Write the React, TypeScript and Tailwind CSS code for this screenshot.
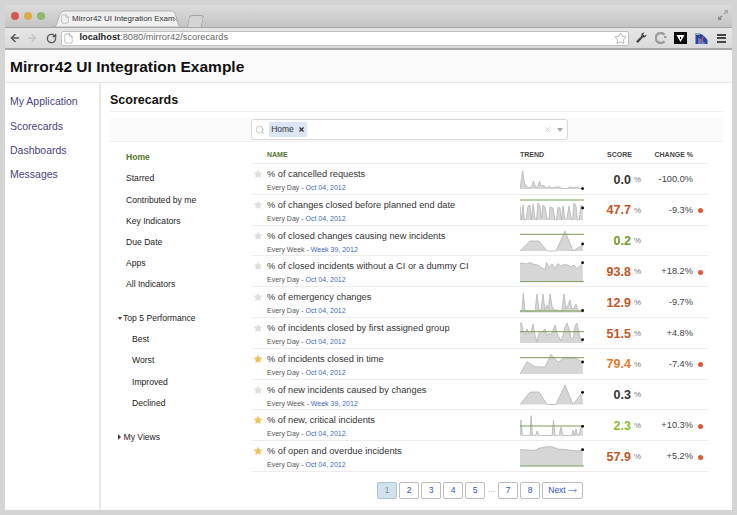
import { ArrowLeft, ArrowRight, RotateCw, File, Star, Search, X, MoveRight } from "lucide-react";

type Row = {
  name: string;
  week?: boolean;
  starred?: boolean;
  score: string;
  color: string;
  change?: string;
  alert?: boolean;
  points: string;
  base: number;
  target?: number;
  dot: number;
};

const rows: Row[] = [
  {
    name: "% of cancelled requests",
    score: "0.0",
    color: "text-[#333333]",
    change: "-100.0%",
    points: "0,20.5 1,14 2.7,3 4.5,15 7,19 10,20 12,17 13.5,13 15.5,19 18,19 19.5,13 21,18 24,17.5 26,20 29,18.5 32,20 36,19 39,19 42,20.5 47,20.5 50,19 54,20 57,19 60,20.5 62.5,20.6",
    base: 21,
    dot: 20.6,
  },
  {
    name: "% of changes closed before planned end date",
    score: "47.7",
    color: "text-[#c2541f]",
    change: "-9.3%",
    alert: true,
    points: "0,8 1.5,22 3,7 4.5,22 6,22 8,8 10,7 11.5,22 13,6 15,20 16.5,22 18,5 20,9 21.5,20 23,7 25,9 27,20 29,22 30,9 33,10 35,22 36.5,22 38,9 40,10 41.5,22 43,8 45,22 47,20 49,8 51,20 52.5,22 54,5 56,8 57.5,22 59,22 61,7 62.5,10",
    base: 22,
    target: 2,
    dot: 10,
  },
  {
    name: "% of closed changes causing new incidents",
    week: true,
    score: "0.2",
    color: "text-[#6f9a23]",
    points: "0,22 10,12 19,12 27,22 36,22 45,2 53,22 62.5,16",
    base: 22,
    target: 5.3,
    dot: 15,
  },
  {
    name: "% of closed incidents without a CI or a dummy CI",
    score: "93.8",
    color: "text-[#c2541f]",
    change: "+18.2%",
    alert: true,
    points: "0,3.5 3,3 6,4 10,2.5 14,4.5 18,5 22,8 25,9.5 26.5,2.5 29,8 32,4 35,8.5 38,3.5 41,6 44,4.5 48,5 51,7 54,5 57,8.5 60,6 62.5,2.7",
    base: 21.6,
    target: 21.6,
    dot: 2.7,
  },
  {
    name: "% of emergency changes",
    score: "12.9",
    color: "text-[#c2541f]",
    change: "-9.7%",
    points: "0,20 2,20 3.3,2.3 5,20 15,20 17,3 19,19 21,19 23,3 25,19 27,14 28.5,18 30,3 32,15 34,19 37,19 40,20 42,18 44,3 46,18 48,14 50,9 52,18 54,17 56,13 58,20 62.5,20",
    base: 21.6,
    target: 20,
    dot: 19.5,
  },
  {
    name: "% of incidents closed by first assigned group",
    score: "51.5",
    color: "text-[#c2541f]",
    change: "+4.8%",
    points: "0,2 1.5,2 3,10 5,14 7,8 9,13 11,12 13,3 15,14 17,21 19,12 21,12 23,10 25,8 27,15 29,12 31,14 33,9 35,4 37,12 39,16 41,20 43,14 45,6 47,2 49,8 51,17 53,18 55,5 57,2 59,13 61,20 62.5,18",
    base: 22,
    target: 10.7,
    dot: 18.7,
  },
  {
    name: "% of incidents closed in time",
    starred: true,
    score: "79.4",
    color: "text-[#df7a2c]",
    change: "-7.4%",
    alert: true,
    points: "0,22 7,9.7 15,14.7 25,15 31,2.3 38,10 44,6 55,6 62.5,10",
    base: 22,
    target: 5.7,
    dot: 10,
  },
  {
    name: "% of new incidents caused by changes",
    week: true,
    score: "0.3",
    color: "text-[#333333]",
    points: "0,21.5 10,9 19,9 27,21.5 36,21.5 45,2 53,21.5 62.5,9",
    base: 21.5,
    dot: 9.3,
  },
  {
    name: "% of new, critical incidents",
    starred: true,
    score: "2.3",
    color: "text-[#8bb92f]",
    change: "+10.3%",
    alert: true,
    points: "0,21.5 1,6 2.5,21.5 10,21.5 11,1.7 12.5,21.5 15.5,21.5 17,17 19,21.5 32,21.5 33.5,6 35,21.5 39,21.5 41,13 43,21.5 52,21.5 53,16 54.5,21.5 56,15 57.5,21.5 59,21 60.5,15 62.5,12.3",
    base: 21.7,
    target: 12,
    dot: 12.3,
  },
  {
    name: "% of open and overdue incidents",
    starred: true,
    score: "57.9",
    color: "text-[#c2541f]",
    change: "+5.2%",
    alert: true,
    points: "0,4.5 8,5 14,5.5 20,3 27,1.7 32,1.7 38,4 46,4.5 52,5.5 58,6 62.5,4.7",
    base: 21,
    target: 21,
    dot: 4.7,
  },
];

const navLinks = ["My Application", "Scorecards", "Dashboards", "Messages"];
const filters = ["Starred", "Contributed by me", "Key Indicators", "Due Date", "Apps", "All Indicators"];
const topFive = ["Best", "Worst", "Improved", "Declined"];
const pages = ["2", "3", "4", "5"];

function Sparkline({ row }: { row: Row }) {
  return (
    <svg width="64" height="24" viewBox="0 0 64 24" className="block">
      <polygon points={`0,${row.base} ${row.points} 63,${row.base}`} fill="#d6d6d6" stroke="none" />
      <polyline points={row.points} fill="none" stroke="#aeaeae" strokeWidth="0.7" />
      {row.target !== undefined && (
        <line x1="0" x2="64" y1={row.target} y2={row.target} stroke="#7a9c55" strokeWidth="1" />
      )}
      <circle cx="62.6" cy={row.dot} r="1.4" fill="#000" />
    </svg>
  );
}

function BrowserChrome() {
  return (
    <>
      <div className="flex h-[23px] shrink-0 items-end bg-gradient-to-b from-[#dcdcdc] to-[#c4c4c4] border-b border-[#a5a5a5]">
        <div className="flex w-[48px] shrink-0 gap-[5px] self-start pl-[6px] pt-[7px]">
          <span className="h-2 w-2 rounded-full bg-[#cf5a54]" />
          <span className="h-2 w-2 rounded-full bg-[#d9aa48]" />
          <span className="h-2 w-2 rounded-full bg-[#93b765]" />
        </div>
        <div className="relative h-[17px] w-[130px] shrink-0">
          <svg width="130" height="17" viewBox="0 0 130 17" className="absolute inset-0">
            <path d="M0 17 C4 17 4 13 6 7 C7 3 9 1 12 1 L118 1 C121 1 122 3 123 7 C125 13 125 17 129 17 Z" fill="#f0f0f0" stroke="#a5a5a5" strokeWidth="0.8" />
          </svg>
          <div className="relative flex h-full items-center pl-[7px] pt-[1px] text-[8px] text-[#333]">
            <File size={10} strokeWidth={1} className="mr-[2px] text-[#888]" />
            <span className="w-[100px] whitespace-nowrap">Mirror42 UI Integration Exam</span>
            <X size={7} strokeWidth={1.5} className="text-[#777]" />
          </div>
        </div>
        <div className="ml-[5px] h-[12px] w-[15px] shrink-0 -skew-x-[12deg] rounded-t-[3px] border border-b-0 border-[#a5a5a5] bg-[#d4d4d4]" />
        <svg width="12" height="12" viewBox="0 0 12 12" className="ml-auto mr-[3px] self-start mt-[4px]" fill="#a8a8a8">
          <path d="M7 1 H11 V5 L9.6 3.6 L7.6 5.6 L6.4 4.4 L8.4 2.4 Z" />
          <path d="M1 11 V7 L2.4 8.4 L4.4 6.4 L5.6 7.6 L3.6 9.6 L5 11 Z" fill="#8c8c8c" />
        </svg>
      </div>
      <div className="flex h-[22px] shrink-0 items-center bg-gradient-to-b from-[#e6e6e6] to-[#dadada] border-b-[2px] border-[#a9a9a9]">
        <ArrowLeft size={12} strokeWidth={3} className="ml-[4px] text-[#555]" />
        <ArrowRight size={12} strokeWidth={3} className="ml-[5px] text-[#c4c4c4]" />
        <RotateCw size={11} strokeWidth={3} className="ml-[8px] text-[#555]" />
        <div className="ml-[4px] flex h-[15px] w-[568px] items-center rounded-[2px] border border-[#c0c0c0] bg-white">
          <File size={11} strokeWidth={1} className="ml-[1px] text-[#777]" />
          <span className="ml-[5.5px] text-[9.25px] text-[#666]">
            <b className="font-bold text-[#222]">localhost</b>:8080/mirror42/scorecards
          </span>
          <Star size={13} strokeWidth={1} className="ml-auto mr-[1.5px] text-[#777]" />
        </div>
        <svg width="12" height="12" viewBox="0 0 12 12" className="ml-[6px]" fill="#444">
          <path d="M11.5 2.5 C11.5 4.6 9.6 6 7.8 5.4 L3 11 L1 9.4 L6.4 4 C5.8 2.2 7.4 0.4 9.6 0.6 L8 2.4 L9.6 3.8 Z" />
        </svg>
        <svg width="12" height="12" viewBox="0 0 12 12" className="ml-[8px]" fill="none">
          <path d="M9.5 2.8 A5 5 0 1 0 9.5 9.2" stroke="#9c9c9c" strokeWidth="2.4" />
          <path d="M9 5 h2.4" stroke="#9c9c9c" strokeWidth="2" />
        </svg>
        <svg width="13" height="12" viewBox="0 0 13 12" className="ml-[7px]">
          <rect width="13" height="12" fill="#0a0a0a" />
          <path d="M2.5 3 H10.5 L6.5 10 Z" fill="#fff" />
          <rect x="6" y="5" width="1" height="2" fill="#000" />
        </svg>
        <svg width="13" height="12" viewBox="0 0 13 12" className="ml-[8px]">
          <path d="M0.5 12 V1 Q7 0 12.5 8 V12 Z" fill="#27479c" />
          <path d="M3 12 V6 Q7 6 10.5 12 Z" fill="#5f7fc9" />
          <path d="M6 11 L8.5 4" stroke="#d84a3c" strokeWidth="1.2" />
          <path d="M0.5 1 L5 1 L5 3 L0.5 3 Z" fill="#9fa9c4" />
        </svg>
        <div className="ml-[9px] flex w-[9px] flex-col gap-[1.5px]">
          <span className="h-[2px] bg-[#444]" />
          <span className="h-[2px] bg-[#444]" />
          <span className="h-[2px] bg-[#444]" />
        </div>
      </div>
    </>
  );
}

function FilterMenu() {
  return (
    <div className="w-[142px] shrink-0 pl-4 pt-[5px] text-[8.6px] text-[#222]">
      <div className="flex h-[21.2px] items-center font-bold text-[#56752f]">Home</div>
      {filters.map((f) => (
        <div key={f} className="flex h-[21.2px] items-center">
          {f}
        </div>
      ))}
      <div className="mt-[12.5px] -ml-[8px] flex h-[21.2px] items-center gap-[1px]">
        <span className="h-0 w-0 border-x-[2.5px] border-t-[3px] border-x-transparent border-t-[#444]" />
        Top 5 Performance
      </div>
      {topFive.map((f) => (
        <div key={f} className="flex h-[21.2px] items-center pl-[6px]">
          {f}
        </div>
      ))}
      <div className="mt-[13px] -ml-[8px] flex h-[21.2px] items-center gap-[2.5px]">
        <span className="h-0 w-0 border-y-[3px] border-l-[3px] border-y-transparent border-l-[#444]" />
        My Views
      </div>
    </div>
  );
}

function ScoreRow({ row }: { row: Row }) {
  return (
    <div className="grid h-[30.8px] grid-cols-[15px_253px_64px_58px_51px_15px] border-b border-[#ececec]">
      <div className="pt-[5px]">
        <Star
          size={10}
          strokeWidth={0}
          className={row.starred ? "ml-[0.5px] fill-[#eec35c]" : "ml-[0.5px] fill-[#dedede]"}
        />
      </div>
      <div className="pt-[4px]">
        <div className="text-[9.25px] leading-[13px] text-[#333]">{row.name}</div>
        <div className="mt-[1px] text-[7px] leading-[11px] text-[#555]">
          {row.week ? "Every Week" : "Every Day"} -{" "}
          <span className="text-[#3f67bd]">{row.week ? "Week 39, 2012" : "Oct 04, 2012"}</span>
        </div>
      </div>
      <div className="pt-[3.5px]">
        <Sparkline row={row} />
      </div>
      <div className="flex items-center justify-end gap-[3px] pr-[1px] pt-[2px]">
        <span className={`text-[12.5px] font-bold ${row.color}`}>{row.score}</span>
        <span className="text-[8px] text-[#777]">%</span>
      </div>
      <div className="self-center pt-[2px] text-right text-[9.25px] text-[#444]">{row.change}</div>
      <div className="flex items-center pl-[5px] pt-[2px]">
        {row.alert && <span className="h-[5px] w-[5px] rounded-full bg-[#e2582f]" />}
      </div>
    </div>
  );
}

function PageButton({ label, active }: { label: string; active?: boolean }) {
  return (
    <button
      className={`h-[17px] w-5 rounded-[2px] border text-[8.5px] ${
        active ? "border-[#a9c5d6] bg-[#d2e2ec] text-[#7c8f9c]" : "border-[#bdbdbd] bg-white text-[#2a52d0]"
      }`}
    >
      {label}
    </button>
  );
}

export default function App() {
  return (
    <div className="h-[515px] w-[737px] overflow-hidden bg-[#d4d4d4] p-[5px] font-['Liberation_Sans',sans-serif]">
      <div className="flex h-[505px] w-[727px] flex-col bg-white">
        <BrowserChrome />
        <div className="flex h-[33px] shrink-0 items-center border-b border-[#e6e6e6] bg-[#fafafa] pl-[5px] pt-[1px] text-[15.5px] font-bold text-[#111]">
          Mirror42 UI Integration Example
        </div>
        <div className="flex flex-1">
          <div className="w-[96px] shrink-0 border-r-2 border-[#e8e8e8] pl-[5px] pt-[7px]">
            {navLinks.map((l) => (
              <div key={l} className="flex h-[24.3px] items-center text-[10.5px] text-[#49417f]">
                {l}
              </div>
            ))}
          </div>
          <div className="flex-1 pl-[9px] pr-[9px]">
            <div className="flex h-[29px] items-end border-b border-[#eeeeee] pb-[1px] text-[12.5px] font-bold text-[#111]">
              Scorecards
            </div>
            <div className="mt-[6px] flex h-[24px] items-center border-b border-[#f0f0f0] bg-[#fafafa] pl-[141px]">
              <div className="flex h-[21px] w-[317px] items-center rounded-[3px] border border-[#d8d8d8] bg-white">
                <Search size={10} strokeWidth={1.5} className="ml-[3px] text-[#aaa]" />
                <span className="ml-[4px] flex h-[15px] w-[38px] items-center justify-center gap-[4px] rounded-[2px] bg-[#dbe5f3] text-[8.5px] text-[#333]">
                  Home
                  <X size={7} strokeWidth={4} className="text-[#333]" />
                </span>
                <X size={9} strokeWidth={1.5} className="ml-auto text-[#bbb]" />
                <span className="ml-[5px] mr-[4px] h-0 w-0 border-x-[3.5px] border-t-[4px] border-x-transparent border-t-[#aaa]" />
              </div>
            </div>
            <div className="flex">
              <FilterMenu />
              <div className="w-[456px]">
                <div className="mt-[5px] grid h-[17px] grid-cols-[15px_253px_64px_58px_51px_15px] items-center border-b border-[#ececec] text-[7px] font-bold text-[#444]">
                  <span />
                  <span className="text-[#56752f]">NAME</span>
                  <span>TREND</span>
                  <span className="pr-[10px] text-right">SCORE</span>
                  <span className="text-right">CHANGE %</span>
                  <span />
                </div>
                {rows.map((r) => (
                  <ScoreRow key={r.name} row={r} />
                ))}
                <div className="mt-[10px] flex items-center justify-center gap-[2px]">
                  <PageButton label="1" active />
                  {pages.map((p) => (
                    <PageButton key={p} label={p} />
                  ))}
                  <span className="mx-[1px] w-[7px] text-[8px] text-[#999]">...</span>
                  <PageButton label="7" />
                  <PageButton label="8" />
                  <button className="flex h-[17px] w-[41px] items-center justify-center gap-[2px] rounded-[2px] border border-[#bdbdbd] bg-white text-[8.5px] text-[#2a52d0]">
                    Next <MoveRight size={9} strokeWidth={1.5} />
                  </button>
                </div>
              </div>
            </div>
          </div>
        </div>
      </div>
    </div>
  );
}
